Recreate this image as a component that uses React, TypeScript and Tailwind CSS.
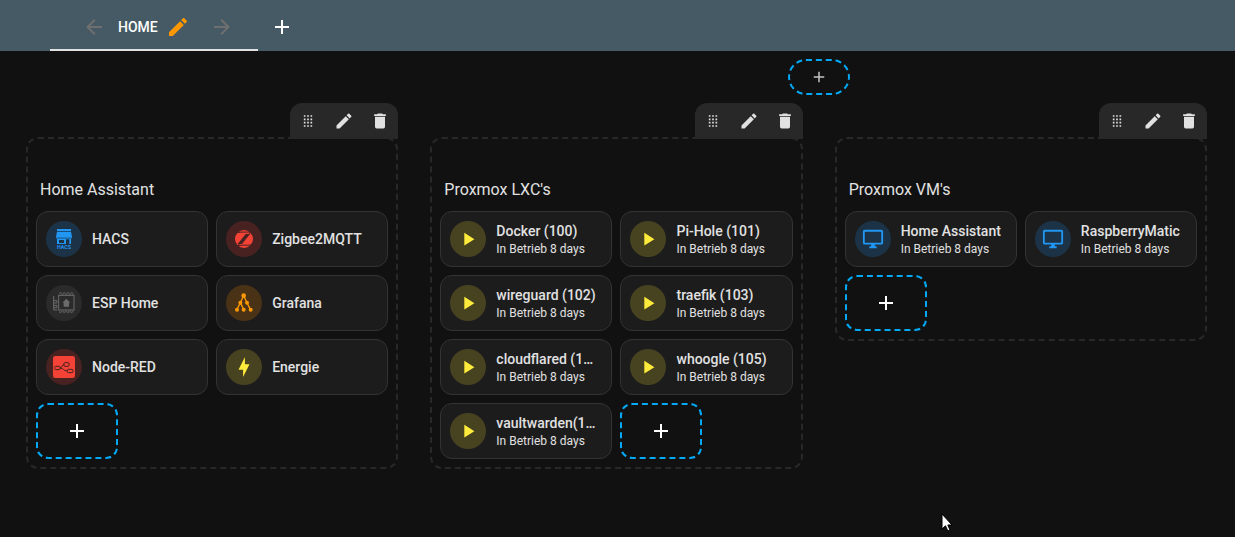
import type { ReactNode } from "react";

type Tile = {
  name: string;
  state?: string;
  icon: ReactNode;
  tone: string;
};

type SectionProps = {
  title: string;
  tiles: Tile[];
};

const PATHS = {
  drag: "M7,19V17H9V19H7M11,19V17H13V19H11M15,19V17H17V19H15M7,15V13H9V15H7M11,15V13H13V15H11M15,15V13H17V15H15M7,11V9H9V11H7M11,11V9H13V11H11M15,11V9H17V11H15M7,7V5H9V7H7M11,7V5H13V7H11M15,7V5H17V7H15Z",
  pencil:
    "M20.71,7.04C21.1,6.65 21.1,6 20.71,5.63L18.37,3.29C18,2.9 17.35,2.9 16.96,3.29L15.12,5.12L18.87,8.87M3,17.25V21H6.75L17.81,9.93L14.06,6.18L3,17.25Z",
  trash:
    "M19,4H15.5L14.5,3H9.5L8.5,4H5V6H19M6,19A2,2 0 0,0 8,21H16A2,2 0 0,0 18,19V7H6V19Z",
  plus: "M19,13H13V19H11V13H5V11H11V5H13V11H19V13Z",
  left: "M20,11V13H8L13.5,18.5L12.08,19.92L4.16,12L12.08,4.08L13.5,5.5L8,11H20Z",
  right: "M4,11V13H16L10.5,18.5L11.92,19.92L19.84,12L11.92,4.08L10.5,5.5L16,11H4Z",
  play: "M8,5.14V19.14L19,12.14L8,5.14Z",
  bolt: "M11 15H6L13 1V9H18L11 23V15Z",
  monitor:
    "M21,16H3V4H21M21,2H3C1.89,2 1,2.89 1,4V16A2,2 0 0,0 3,18H10V20H8V22H16V20H14V18H21A2,2 0 0,0 23,16V4C23,2.89 22.1,2 21,2Z",
};

function Icon({ path, className }: { path: string; className: string }) {
  return (
    <svg viewBox="0 0 24 24" fill="currentColor" aria-hidden="true" className={className}>
      <path d={path} />
    </svg>
  );
}

// -------------------------
// TILE ICONS
// -------------------------
function HacsIcon() {
  return (
    <svg viewBox="0 0 66 66" fill="currentColor" aria-hidden="true" className="size-[22px]">
      <rect x="12" y="3" width="42" height="6" />
      <path d="M12 11H54L57 27H9Z" />
      <path d="M9 27H57V32H9Z" opacity="0.7" />
      <path d="M12 32H54V48H12ZM18 36V45H33V36ZM39 34V48H49V34Z" fillRule="evenodd" />
      <text x="33" y="63" textAnchor="middle" fontSize="16" fontWeight="700" fontFamily="Roboto, sans-serif">
        HACS
      </text>
    </svg>
  );
}

function ZigbeeIcon() {
  return (
    <svg viewBox="0 0 66 66" aria-hidden="true" className="size-[22px]">
      <circle cx="33" cy="33" r="27" fill="currentColor" />
      <path
        d="M13 14C24 11 36 13 52 12M53 14L15 52M14 53C28 50 42 53 54 51"
        fill="none"
        stroke="#472220"
        strokeWidth="3"
      />
      <path d="M38 18H51L27 48H14Z" fill="#472220" />
    </svg>
  );
}

function EspHomeIcon() {
  return (
    <svg viewBox="0 0 66 66" fill="none" stroke="currentColor" strokeWidth="3" aria-hidden="true" className="size-[22px]">
      <rect x="17" y="10" width="46" height="44" />
      <path d="M20 7V2H25V7H31V2H36V7H42V2H47V7H53V2H58V7H62" strokeWidth="2" />
      <path d="M20 57V62H25V57H31V62H36V57H42V62H47V57H53V62H58V57H62" strokeWidth="2" />
      <path d="M2 12V54H13M2 26H12V33H2M2 40H12V47H2" />
      <path d="M40 20L52 32H48V44H32V32H28Z" fill="currentColor" stroke="none" />
    </svg>
  );
}

function GrafanaIcon() {
  return (
    <svg viewBox="0 0 66 66" fill="currentColor" aria-hidden="true" className="size-[22px]">
      <path
        d="M32 11L22 32L12 52M32 11L42 32L52 52M22 32L32 52"
        fill="none"
        stroke="currentColor"
        strokeWidth="4"
      />
      <circle cx="32" cy="11" r="7" />
      <circle cx="22" cy="32" r="6" />
      <circle cx="42" cy="32" r="6" />
      <circle cx="12" cy="53" r="6" />
      <circle cx="32" cy="53" r="6" />
      <circle cx="53" cy="53" r="6" />
    </svg>
  );
}

function NodeRedIcon() {
  return (
    <svg viewBox="0 0 66 66" fill="none" stroke="#472220" strokeWidth="3" aria-hidden="true" className="size-[22px]">
      <rect width="66" height="66" rx="7" fill="currentColor" stroke="none" />
      <rect x="5" y="31" width="16" height="10" rx="3" />
      <rect x="33" y="20" width="15" height="11" rx="3" />
      <rect x="43" y="40" width="17" height="10" rx="3" />
      <path d="M21 36C29 36 25 26 33 26M21 36C33 36 30 45 43 45" />
    </svg>
  );
}

const monitor = <Icon path={PATHS.monitor} className="size-[22px]" />;
const play = <Icon path={PATHS.play} className="size-[22px]" />;

const YELLOW = "bg-[#474320] text-[#ffeb3b]";
const BLUE = "bg-[#1c3347] text-[#2196f3]";
const RED = "bg-[#472220] text-[#f44336]";

const container = (name: string): Tile => ({
  name,
  state: "In Betrieb 8 days",
  icon: play,
  tone: YELLOW,
});

const SECTIONS: SectionProps[] = [
  {
    title: "Home Assistant",
    tiles: [
      { name: "HACS", icon: <HacsIcon />, tone: BLUE },
      { name: "Zigbee2MQTT", icon: <ZigbeeIcon />, tone: RED },
      { name: "ESP Home", icon: <EspHomeIcon />, tone: "bg-[#2b2b2b] text-[#6b6b6b]" },
      { name: "Grafana", icon: <GrafanaIcon />, tone: "bg-[#493216] text-[#ff9800]" },
      { name: "Node-RED", icon: <NodeRedIcon />, tone: RED },
      { name: "Energie", icon: <Icon path={PATHS.bolt} className="size-[22px]" />, tone: YELLOW },
    ],
  },
  {
    title: "Proxmox LXC's",
    tiles: [
      container("Docker (100)"),
      container("Pi-Hole (101)"),
      container("wireguard (102)"),
      container("traefik (103)"),
      container("cloudflared (1…"),
      container("whoogle (105)"),
      container("vaultwarden(1…"),
    ],
  },
  {
    title: "Proxmox VM's",
    tiles: [
      { name: "Home Assistant", state: "In Betrieb 8 days", icon: monitor, tone: BLUE },
      { name: "RaspberryMatic", state: "In Betrieb 8 days", icon: monitor, tone: BLUE },
    ],
  },
];

function TileCard({ name, state, icon, tone }: Tile) {
  return (
    <button
      type="button"
      className="flex h-14 min-w-0 items-center gap-2.5 rounded-xl border border-[#333333] bg-[#1c1c1c] px-[9px] text-left"
    >
      <span className={`flex size-9 shrink-0 items-center justify-center rounded-full ${tone}`}>{icon}</span>
      <span className="min-w-0 flex-1">
        <span className="block truncate text-sm font-medium leading-5">{name}</span>
        {state && <span className="block truncate text-xs leading-4">{state}</span>}
      </span>
    </button>
  );
}

function SectionToolbar() {
  return (
    <div className="relative z-10 -mb-0.5 flex self-end rounded-t-xl bg-[#282828] text-[#e1e1e1]">
      <button type="button" aria-label="Move section" className="flex size-9 items-center justify-center">
        <Icon path={PATHS.drag} className="size-5" />
      </button>
      <button type="button" aria-label="Edit section" className="flex size-9 items-center justify-center">
        <Icon path={PATHS.pencil} className="size-5" />
      </button>
      <button type="button" aria-label="Delete section" className="flex size-9 items-center justify-center">
        <Icon path={PATHS.trash} className="size-5" />
      </button>
    </div>
  );
}

function Section({ title, tiles }: SectionProps) {
  return (
    <section className="flex min-w-0 flex-col">
      <SectionToolbar />
      <div className="grid grid-cols-2 gap-2 rounded-xl border-2 border-dashed border-[#282828] p-2">
        <h2 className="col-span-2 flex h-14 items-end px-1 pb-px text-base leading-6">{title}</h2>
        {tiles.map((tile) => (
          <TileCard key={tile.name} {...tile} />
        ))}
        <button
          type="button"
          aria-label="Add card"
          className="flex h-14 w-[82px] items-center justify-center rounded-xl border-2 border-dashed border-[#03a9f4] text-white"
        >
          <Icon path={PATHS.plus} className="size-6" />
        </button>
      </div>
    </section>
  );
}

export default function App() {
  return (
    <div className="relative min-h-screen bg-[#111111] font-[Roboto,sans-serif] text-[#e1e1e1]">
      <header className="flex h-[51px] bg-[#455a64] pl-[50px] text-white">
        <div className="flex items-center border-b-2 border-[#e1e1e1] pt-[5px] pr-6 pl-8">
          <button type="button" aria-label="Move view left" disabled className="text-[#6f6f6f]">
            <Icon path={PATHS.left} className="size-6" />
          </button>
          <a href="#home" className="ml-3 text-sm font-medium">
            HOME
          </a>
          <button type="button" aria-label="Edit view" className="ml-2 text-[#ff9800]">
            <Icon path={PATHS.pencil} className="size-6" />
          </button>
          <button type="button" aria-label="Move view right" disabled className="ml-5 text-[#6f6f6f]">
            <Icon path={PATHS.right} className="size-6" />
          </button>
        </div>
        <button type="button" aria-label="Add view" className="px-3 pt-[3px]">
          <Icon path={PATHS.plus} className="size-6" />
        </button>
      </header>

      <main className="pt-2 pr-7 pl-[26px]">
        {/* badges sit above the gap between the second and third column */}
        <div className="grid grid-cols-3 gap-8">
          <button
            type="button"
            aria-label="Add badge"
            className="col-start-2 -mr-[47px] flex h-9 w-[62px] items-center justify-center justify-self-end rounded-full border-2 border-dashed border-[#03a9f4] text-[#c4c4c4]"
          >
            <Icon path={PATHS.plus} className="size-[18px]" />
          </button>
        </div>

        <div className="mt-2 grid grid-cols-3 items-start gap-8">
          {SECTIONS.map((section) => (
            <Section key={section.title} {...section} />
          ))}
        </div>
      </main>

      <svg viewBox="0 0 12 19" aria-hidden="true" className="absolute top-[513px] left-[941px] h-[19px] w-3">
        <path
          d="M1 1V16L4.5 12.8L6.8 18L9 17L6.8 12H11Z"
          fill="#ffffff"
          stroke="#000000"
          strokeWidth="1"
        />
      </svg>
    </div>
  );
}
